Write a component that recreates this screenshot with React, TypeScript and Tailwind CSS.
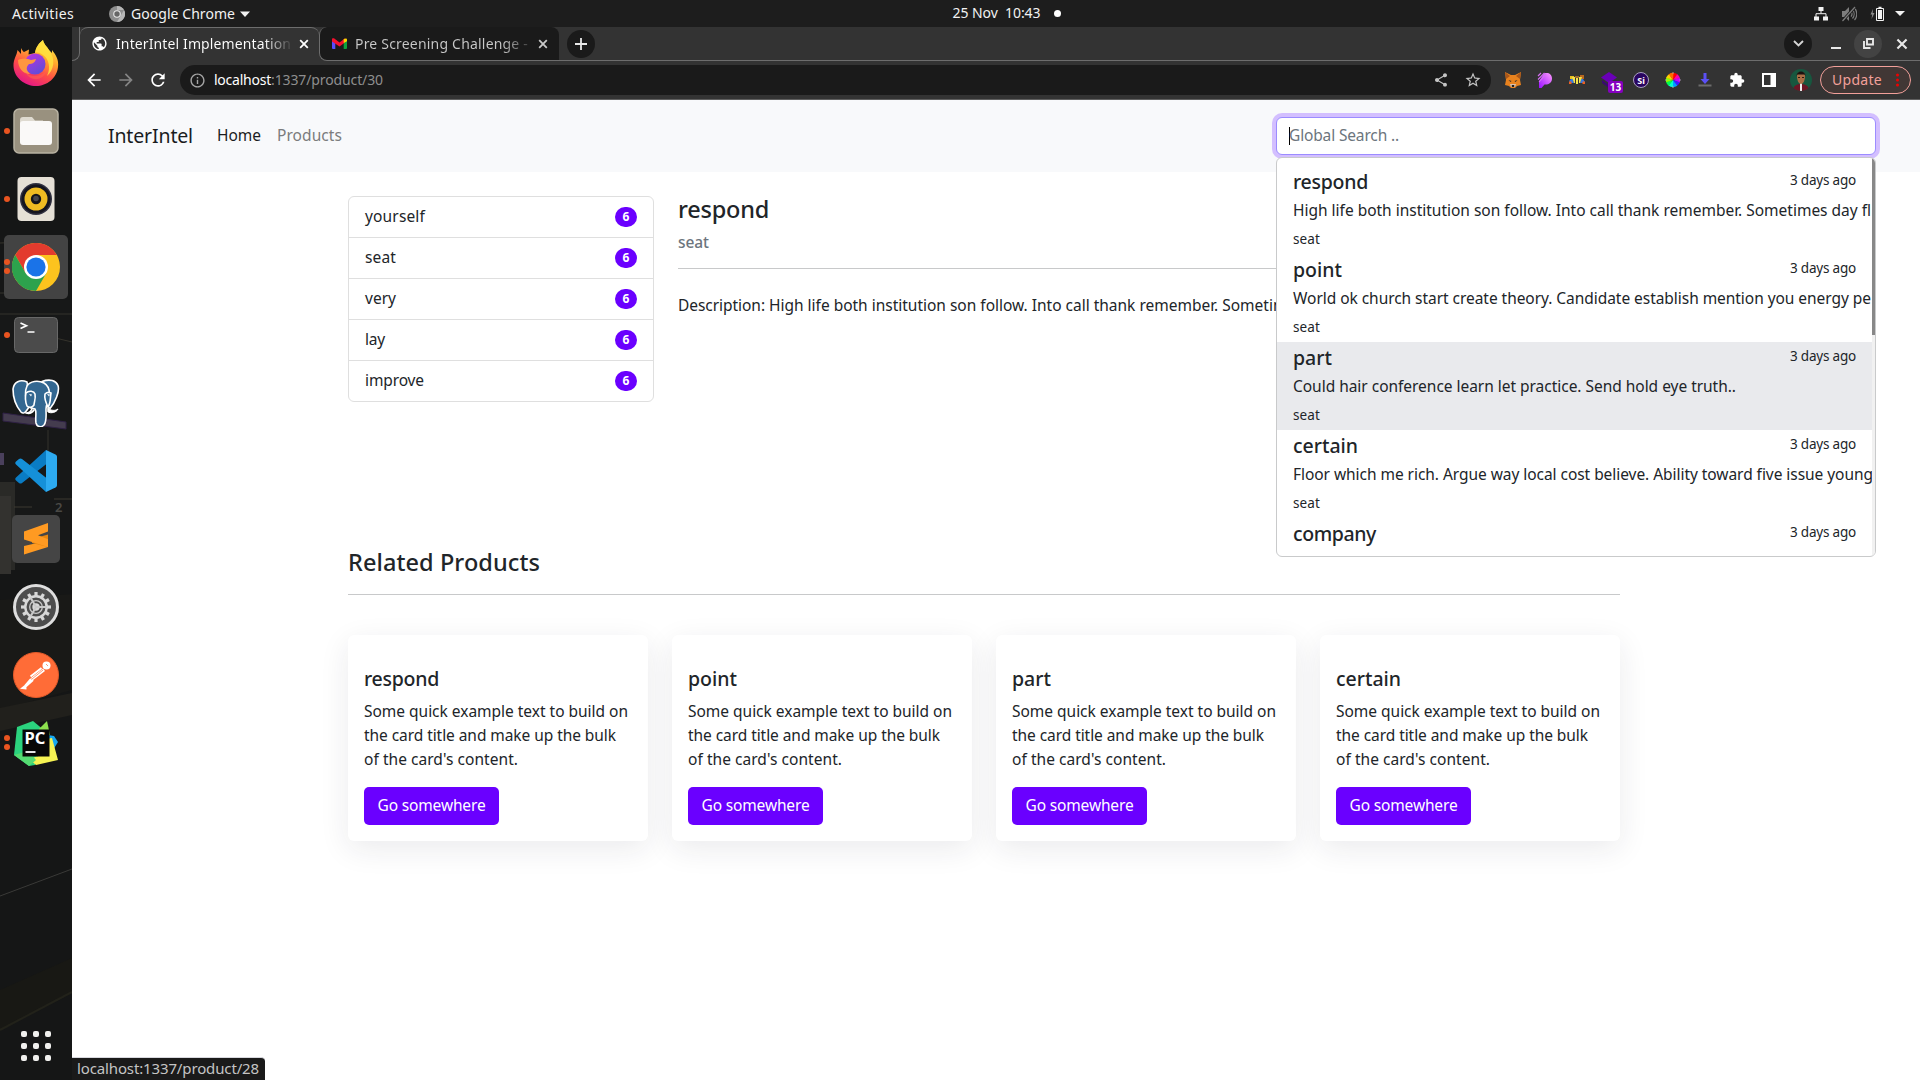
import React, { useLayoutEffect, useRef, useState } from "react";
import { MdExtension, MdShare, MdStarBorder, MdArrowBack, MdArrowForward, MdRefresh, MdPublic, MdInfoOutline } from "react-icons/md";

/* One line of text, tracked so that it spans exactly `w` pixels. */
function Line({ w, className = "", children }: { w: number; className?: string; children: string }) {
  const ref = useRef<HTMLSpanElement>(null);
  const [spacing, setSpacing] = useState(0);
  useLayoutEffect(() => {
    if (!ref.current) return;
    const natural = ref.current.getBoundingClientRect().width;
    setSpacing((w - natural) / children.length);
  }, [w, children]);
  return (
    <span ref={ref} className={`inline-block whitespace-pre ${className}`} style={{ letterSpacing: spacing }}>
      {children}
    </span>
  );
}

/* ---------- Top panel ---------- */

function TopBar() {
  return (
    <header className="grid h-[27px] shrink-0 grid-cols-[1fr_auto_1fr] items-center bg-[#1d1d1d] text-sm text-[#f2f2f2]">
      <div className="flex items-center pl-3">
        <Line w={62}>Activities</Line>
        <svg className="ml-[35px] size-4" viewBox="0 0 16 16">
          <circle cx="8" cy="8" r="8" fill="#8d8d8d" />
          <path d="M8 0a8 8 0 0 1 7 4H8zM15 4a8 8 0 0 1-7 12l3.500-6z" fill="#b5b5b5" />
          <circle cx="8" cy="8" r="3.800" fill="#e8e8e8" />
          <circle cx="8" cy="8" r="2.700" fill="#666" />
        </svg>
        <Line w={104} className="ml-[6px]">Google Chrome</Line>
        <svg className="ml-[5px] h-[6px] w-[10px]" viewBox="0 0 10 6"><path d="M0 .5h10L5 6z" fill="#f2f2f2" /></svg>
      </div>
      <div className="flex items-center pl-[93px]">
        <Line w={88} className="pb-0.5">25 Nov  10:43</Line>
        <span className="ml-[13px] size-[7px] rounded-full bg-white" />
      </div>
      <div className="flex items-center justify-end pr-[15px]">
        <svg className="size-4" viewBox="0 0 16 16" fill="#f2f2f2">
          <path d="M5.500 1h5v4h-5zM1 10.500h5v4H1zM10 10.500h5v4h-5z" />
          <path d="M8 5v2.500M3 11V7.700h10V11" fill="none" stroke="#f2f2f2" strokeWidth="1" />
        </svg>
        <svg className="ml-[12px] size-4" viewBox="0 0 16 16" fill="#7d7d7d">
          <path d="M1 5h3l4-4v14l-4-4H1z" />
          <path d="M10 5.500a4 4 0 0 1 0 5M11.500 3.500a7 7 0 0 1 0 9M13.500 2a9 9 0 0 1 0 12" fill="none" stroke="#7d7d7d" strokeWidth="1.200" />
          <path d="M1.500 15L14 1" stroke="#1d1d1d" strokeWidth="3" />
          <path d="M1.500 15L14 1" stroke="#7d7d7d" strokeWidth="1.200" />
        </svg>
        <svg className="ml-[13px] h-4 w-[15px]" viewBox="0 0 15 16">
          <path d="M3 3L.5 8.500h1.700L1.500 13 4.500 7H2.700z" fill="#8a8a8a" />
          <path d="M6.500 2.500h7v12h-7z" fill="none" stroke="#f2f2f2" strokeWidth="1" />
          <path d="M8.500.8h3v1.500h-3zM8 4h4v9H8z" fill="#f2f2f2" />
        </svg>
        <svg className="ml-[10px] h-[5px] w-[10px]" viewBox="0 0 10 5"><path d="M0 0h10L5 5z" fill="#f2f2f2" /></svg>
      </div>
    </header>
  );
}

/* ---------- Dock ---------- */

const gear = Array.from({ length: 12 }, (_, i) => i * 30);

const Firefox = () => (
  <svg className="size-[46px]" viewBox="0 0 46 46">
    <defs>
      <linearGradient id="ff1" x1=".8" y1="0" x2=".3" y2="1">
        <stop offset="0" stopColor="#fff44f" /><stop offset=".35" stopColor="#ffa92c" /><stop offset=".65" stopColor="#ff4f45" /><stop offset="1" stopColor="#e2148a" />
      </linearGradient>
      <linearGradient id="ff2" x1=".2" y1="0" x2=".8" y2="1"><stop offset="0" stopColor="#b833e1" /><stop offset="1" stopColor="#5a4fd6" /></linearGradient>
    </defs>
    <path d="M8 8c1 2 2 3.500 3 4l5-2.500-.5 5L22 13c1-6 4-10 8-13 1 5 4 6 6 10l3 3v-3c4 5 7 10 6 17C44 38 34 46 23 46S1 38 .5 26C.3 19 4 15 4.500 10L8 14z" fill="url(#ff1)" />
    <path d="M30 0c1 5 4 6 6 10 7 9 5 20-2 26 4-8 2-17-4-21-3-2-5-3-8-2 1-6 4-10 8-13z" fill="#ffe23e" opacity=".85" />
    <circle cx="22" cy="24" r="10.500" fill="url(#ff2)" />
    <path d="M5 20c5-2 10-1 13 0l5-1c-1 4-4 5-7 5-4 4-2 7 1 10-7 0-12-6-12-14z" fill="#ff9640" />
    <path d="M12 32c6 6 16 5 21-1-1 8-14 13-21 1z" fill="#ff5b4f" opacity=".7" />
  </svg>
);

const Files = () => (
  <svg className="size-[46px]" viewBox="0 0 46 46">
    <rect x="1" y="1" width="44" height="44" rx="5" fill="#99917f" stroke="#b8b2a2" strokeWidth="1.500" />
    <path d="M7 12a3 3 0 0 1 3-3h9l3 3.500h8V30H7z" fill="#dedad0" />
    <rect x="7" y="13" width="32" height="24" rx="3" fill="#faf9f8" />
  </svg>
);

const Rhythmbox = () => (
  <svg className="size-[46px]" viewBox="0 0 46 46">
    <rect x="4.500" y="1" width="37" height="44" rx="4" fill="#e5e0d6" />
    <circle cx="23" cy="23" r="16" fill="#303040" />
    <circle cx="23" cy="23" r="14.500" fill="#15151f" />
    <circle cx="23" cy="23" r="11.500" fill="#efbb22" />
    <circle cx="23" cy="23" r="5.200" fill="#15151a" />
    <circle cx="23" cy="22.500" r="2.800" fill="#45454c" />
  </svg>
);

const Chrome = () => (
  <svg className="size-12" viewBox="0 0 48 48">
    <circle cx="24" cy="24" r="24" fill="#fcc31e" />
    <path d="M24 12h20.800a24 24 0 0 0-41.600 0L13.600 30z" fill="#e33b2e" />
    <path d="M3.200 12A24 24 0 0 0 24 48l10.400-18H13.600z" fill="#2da24d" />
    <circle cx="24" cy="24" r="12" fill="#fff" />
    <circle cx="24" cy="24" r="9.600" fill="#1a73e8" />
  </svg>
);

const Terminal = () => (
  <svg className="h-9 w-11" viewBox="0 0 44 36">
    <rect x=".5" y=".5" width="43" height="35" rx="4" fill="#4b4b4b" stroke="#686868" />
    <path d="M6.500 6l6 2.800-6 2.800M13.500 15h7" fill="none" stroke="#fff" strokeWidth="1.700" />
  </svg>
);

const Postgres = () => (
  <svg className="size-12" viewBox="0 0 48 48">
    <g fill="#336791" stroke="#fff" strokeWidth="1.600" strokeLinejoin="round" strokeLinecap="round">
      <path d="M30 2.500c8-3 14-1 16 4 2 6-3 17-8 23L30 22z" />
      <path d="M15 3C8 0 2 3 1 10c0 8 3 17 8 23 2 2 4 1 6-2l4-6-3-15z" />
      <path d="M15 7c3-5 11-6 17-3 5 3 6 9 5 15-1 4-3 7-3 11 0 6 1 12-2 16-3 3-7 2-8-2-1-6 1-11-1-14-2-1-5 0-6-3-3-5-5-13-2-20z" />
      <path d="M14 14c3-3 8-2 9 1 1 5-1 8-1 11-2 3-5 3-7 1-2-5-2-9-1-13z" />
      <path d="M22 31c-2 3-5 4-8 3 3 0 5-2 6-4" fill="none" />
      <path d="M36 29c3 3 7 3 10 1-1 3-7 5-10 3z" fill="#fff" strokeWidth="1" />
      <path d="M33 15c2-2 4-2 6-1-1 5 0 10-3 14-2-4-4-8-3-13z" />
    </g>
    <path d="M17 15l3 .5-1 2zM35 15l3 .5-1 2z" fill="#fff" />
  </svg>
);

const VsCode = () => (
  <svg className="size-[42px]" viewBox="0 0 42 42">
    <path d="M31 0L1 27.500c-1 1-1 2 0 3l3 2.500c1 .8 2 .8 3 0L34 12z" fill="#0a7cc4" />
    <path d="M31 42L1 14.500c-1-1-1-2 0-3L4 9c1-.8 2-.8 3 0l27 21z" fill="#1590d8" />
    <path d="M31 0l9.500 4.500c1 .5 1.500 1.200 1.500 2.500v28c0 1.300-.5 2-1.500 2.500L31 42z" fill="#2daaf0" />
  </svg>
);

const Sublime = () => (
  <span className="flex size-12 items-center justify-center rounded-[5px] bg-[#454545]">
    <svg className="h-8 w-6" viewBox="0 0 24 32">
      <path d="M24 17.500V24L0 31.500V23z" fill="#ff9a22" />
      <path d="M8 16l16-4.500V24L8 20z" fill="#e8860f" />
      <path d="M0 8.500L24 0v8.500l-10 3.800 10 4V24L0 16.500z" fill="#ff9a22" />
    </svg>
  </span>
);

const Settings = () => (
  <svg className="size-[46px]" viewBox="0 0 46 46">
    <circle cx="23" cy="23" r="21.500" fill="#4d4d4d" stroke="#dedede" strokeWidth="3" />
    {gear.map((a) => (
      <rect key={a} x="21.400" y="8" width="3.200" height="5" fill="#d8d8d8" transform={`rotate(${a} 23 23)`} />
    ))}
    <circle cx="23" cy="23" r="10.700" fill="none" stroke="#d8d8d8" strokeWidth="2.400" />
    <circle cx="23" cy="23" r="6.300" fill="none" stroke="#c9c9c9" strokeWidth="1.300" />
    <circle cx="23" cy="23" r="3.700" fill="#d8d8d8" />
    <path d="M23 23h11M23 23l-5.500-9.500M23 23l-5.500 9.500" stroke="#c9c9c9" strokeWidth="2" />
  </svg>
);

const Postman = () => (
  <svg className="size-[46px]" viewBox="0 0 46 46">
    <circle cx="23" cy="23" r="22.500" fill="#ff6c37" stroke="#e25a2a" />
    <circle cx="33.500" cy="13.500" r="4" fill="#fff" />
    <path d="M30 16.500L18 26l1.500 2.500L32 19z" fill="#fff" />
    <path d="M17.500 24.500l11-8.500M20 28l-9 8M18 27l-6 7-2.500 2 4 .5" fill="none" stroke="#fff" strokeWidth="2" />
    <path d="M19 27l11-9M33 12l2 2" stroke="#ff6c37" strokeWidth=".7" />
  </svg>
);

const PyCharm = () => (
  <svg className="size-[46px]" viewBox="0 0 46 46">
    <path d="M4 7L20 1l12 10-10 34-6 1L1 35z" fill="#2bd37e" />
    <path d="M26 9l8-8 3 14-10 6z" fill="#8de04e" />
    <path d="M35 15l6 1 4 6-5 8z" fill="#17a8f0" />
    <path d="M33 19l6-1 6 22-22 5-7-6 16-5z" fill="#f6f353" />
    <path d="M1 35l14-4 8 9-7 6z" fill="#55db72" />
    <rect x="9.500" y="9.500" width="27" height="27" fill="#080808" />
    <text x="11.500" y="23.500" fontFamily="Noto Sans, sans-serif" fontWeight="700" fontSize="16.500" fill="#fff">PC</text>
    <path d="M12.500 32h10" stroke="#fff" strokeWidth="1.800" />
  </svg>
);

const dock = [
  { Icon: Firefox, dots: 0 }, { Icon: Files, dots: 1 }, { Icon: Rhythmbox, dots: 1 }, { Icon: Chrome, dots: 2, active: true },
  { Icon: Terminal, dots: 1 }, { Icon: Postgres, dots: 0 }, { Icon: VsCode, dots: 0 }, { Icon: Sublime, dots: 0 },
  { Icon: Settings, dots: 0 }, { Icon: Postman, dots: 0 }, { Icon: PyCharm, dots: 2 },
];

function Wallpaper() {
  return (
    <svg className="absolute inset-0 h-full w-[72px]" viewBox="0 27 72 1053" preserveAspectRatio="none">
      <rect y="27" width="72" height="1053" fill="#151616" />
      <path d="M0 300h72v270H0z" fill="#171818" />
      <path d="M0 243l28-1M0 293h30M0 314h72M14 328l58 14M48 430v40" stroke="#35332c" strokeWidth="1" />
      <path d="M3 413l63 9v7L3 421z" fill="#443c4e" stroke="#2f2145" />
      <path d="M0 453h4v12H0z" fill="#4a405c" />
      <path d="M0 482h15v88H0z" fill="#2a2a27" />
      <path d="M0 496h11v78H0z" fill="#33322f" />
      <path d="M54 499h18M14 507h18" stroke="#3c3930" />
      <text x="55" y="512" fontFamily="Noto Sans, sans-serif" fontSize="13" fontWeight="600" fill="#4a4945">2</text>
      <path d="M0 600l72-6v96l-72 20z" fill="#191917" />
      <path d="M0 708l72-15v22L0 731z" fill="#21201c" />
      <path d="M0 896l72-27" stroke="#3a3a38" />
      <path d="M0 990l72-32v35L0 1030z" fill="#181814" />
      <path d="M0 1030l72-38" stroke="#22221a" strokeWidth="2" />
    </svg>
  );
}

function Dock() {
  return (
    <nav className="relative w-[72px] shrink-0 overflow-hidden bg-[#151616]">
      <Wallpaper />
      <div className="relative flex h-full flex-col pt-[1.500px]">
        {dock.map(({ Icon, dots, active }, i) => (
          <div key={i} className="relative flex h-[68px] items-center justify-center">
            <div className={`flex size-16 items-center justify-center rounded-[5px] ${active ? "bg-[#434343]" : ""}`}>
              <Icon />
            </div>
            <div className="absolute left-1 flex flex-col gap-[3px]">
              {Array.from({ length: dots }, (_, d) => <span key={d} className="size-[6px] rounded-full bg-[#e95420]" />)}
            </div>
          </div>
        ))}
        <div className="mt-auto mb-[19px] grid grid-cols-3 gap-[6px] self-center">
          {Array.from({ length: 9 }, (_, i) => <span key={i} className="size-[6px] rounded-[2px] bg-[#f0f0ee]" />)}
        </div>
      </div>
    </nav>
  );
}

/* ---------- Browser chrome ---------- */

const Cross = ({ className = "" }: { className?: string }) => (
  <svg className={`shrink-0 ${className}`} viewBox="0 0 10 10"><path d="M1.200 1.200l7.600 7.600M8.800 1.200L1.200 8.800" stroke="currentColor" strokeWidth="1.800" /></svg>
);

function TabStrip() {
  return (
    <div className="flex h-[34px] shrink-0 bg-[#333333]">
      <div className="w-2 rounded-br-lg border-r border-b border-[#6d6d6d]" />
      <div className="flex h-[34px] w-[239px] items-center rounded-t-lg border-t border-[#6d6d6d] pb-0.5 pl-[11px] text-white">
        <MdPublic className="size-[17px] shrink-0" />
        <Line w={175} className="ml-[8px] bg-linear-to-r from-white from-85% to-[#444] bg-clip-text text-sm text-transparent">InterIntel Implementation</Line>
        <Cross className="ml-[8px] size-[10px]" />
      </div>
      <div className="flex h-[34px] w-[240px] items-center rounded-t-lg rounded-bl-lg border-b border-l border-[#6d6d6d] bg-[#1a1a1a] pl-[12px] text-[#c9c9c9]">
        <svg className="h-[11px] w-[15px] shrink-0" viewBox="0 0 15 11">
          <path d="M0 1l3.300 2.500V11H1a1 1 0 0 1-1-1z" fill="#5a4bff" /><path d="M11.700 3.500L15 1v9a1 1 0 0 1-1 1h-2.300z" fill="#10a33c" />
          <path d="M0 1C0 0 1 0 2 .3l5.500 4.200L13 .3V4.500L7.500 8.500 0 3.500z" fill="#f5102e" /><path d="M11.700 1.300c1-1 3.300-1.500 3.300.5v1.500L11.700 5z" fill="#ffd400" />
        </svg>
        <Line w={173} className="ml-[8px] bg-linear-to-r from-[#c9c9c9] from-85% to-[#444] bg-clip-text text-sm text-transparent">Pre Screening Challenge -</Line>
        <Cross className="ml-[10px] size-[10px]" />
      </div>
      <div className="flex flex-1 items-center border-b border-[#6d6d6d] pr-[12px] pl-[8px] text-[#e8e8e8]">
        <span className="flex size-7 items-center justify-center rounded-full bg-[#1a1a1a]">
          <svg className="size-3" viewBox="0 0 12 12"><path d="M6 0v12M0 6h12" stroke="#e8e8e8" strokeWidth="1.800" /></svg>
        </span>
        <span className="ml-auto flex size-7 items-center justify-center rounded-full bg-[#1a1a1a]">
          <svg className="h-[7px] w-[11px]" viewBox="0 0 11 7"><path d="M1 1l4.500 4.500L10 1" fill="none" stroke="#d5d5d5" strokeWidth="1.900" /></svg>
        </span>
        <span className="mt-[9px] ml-[19px] h-[2px] w-[10px] bg-[#e8e8e8]" />
        <span className="ml-[13px] flex size-7 items-center justify-center rounded-full bg-[#434343]">
          <svg className="size-[11px]" viewBox="0 0 11 11"><path d="M4 1h6v5.500H4zM1 3v7h6.500" fill="none" stroke="#e8e8e8" strokeWidth="1.900" /></svg>
        </span>
        <Cross className="ml-[14px] size-[12px]" />
      </div>
    </div>
  );
}

const wheel = ["#ff0000", "#ff00aa", "#c800ff", "#3a1cff", "#00a0ff", "#00ffd0", "#00ff50", "#8cff00", "#ffd000", "#ff6a00"];

function Extensions() {
  return (
    <div className="flex items-center gap-4 pl-[14px]">
      <svg className="size-4" viewBox="0 0 16 16">
        <path d="M0 0l6 3h4l6-3-1 8 1 5-4 1-2 2H6l-2-2-4-1 1-5z" fill="#e8821e" />
        <path d="M0 0l5 4-4 3zM16 0l-5 4 4 3z" fill="#a8561a" /><path d="M3.500 8l3 1-1 1zM12.500 8l-3 1 1 1z" fill="#2b2b2b" /><path d="M5 12h6l-1 3H6z" fill="#d8c0b0" /><path d="M6.800 13h2.400v2H6.800z" fill="#222" />
      </svg>
      <svg className="size-4" viewBox="0 0 16 16">
        <defs><linearGradient id="pp" x1="0" y1="1" x2="1" y2="0"><stop offset="0" stopColor="#9a10ff" /><stop offset="1" stopColor="#ff9aff" /></linearGradient></defs>
        <path d="M7 1.500C11 0 15 2 15 6.500S11 13 7.500 12.500L4.500 16H2V9z" fill="url(#pp)" />
        <path d="M1 4l3-3M1 7.500L7.500 1M2 10l7-8" stroke="#d770f5" strokeWidth="1.100" />
      </svg>
      <svg className="size-4" viewBox="0 0 16 16">
        <path d="M1 4h4v3H1z" fill="#e8c020" /><path d="M11 3h4v4h-4z" fill="#b86820" /><path d="M6 4h4v2H6z" fill="#9a6a30" />
        <path d="M0 9l2-2h2l1 4H2zM11 11l1-4h2l2 3-2 1z" fill="#3478e0" /><path d="M3 5h3v6H5zM7 6h2v6H7zM10 5h3l-2 6h-1z" fill="#f5e34a" /><path d="M0 9.500h2.500v2.500H0zM13.500 9.500H16V12h-2.500z" fill="#f06020" />
      </svg>
      <span className="relative size-4">
        <svg className="size-4" viewBox="0 0 16 16"><path d="M8 0l8 5.500-8 5.500-8-5.500z" fill="#6a00b8" /><path d="M1 8l7 5 7-5v3l-7 5-7-5z" fill="#3a0a70" /></svg>
        <span className="absolute top-[9px] left-[7px] flex h-[12px] w-[15px] items-center justify-center rounded-[2px] bg-[#8500c0] text-[10px] leading-none font-bold text-white">13</span>
      </span>
      <span className="flex size-4 items-center justify-center rounded-full border border-[#a9a0c0] bg-[#2a0560] text-[9px] leading-none font-bold text-white">Si</span>
      <svg className="size-4" viewBox="0 0 16 16">
        {wheel.map((c, i) => <path key={c} d="M8 8L8 .8A7.200 7.200 0 0 1 12.600 2.500z" fill={c} transform={`rotate(${i * 36} 8 8)`} />)}
        <path d="M8 0v2M8 14v2M0 8h2M14 8h2" stroke="#aaa" strokeWidth=".8" />
      </svg>
      <svg className="size-4" viewBox="0 0 16 16"><path d="M6.500 1h3v6h3L8 12 3.500 7h3z" fill="#5b50f5" /><path d="M1.500 12.500h13v2h-13z" fill="#6c6c6c" /></svg>
      <MdExtension className="size-4 text-white" />
      <svg className="size-4" viewBox="0 0 16 16"><path d="M1 1h14v14H1zM3 3v10h6.500V3z" fill="#fff" fillRule="evenodd" /></svg>
    </div>
  );
}

function Toolbar() {
  return (
    <div className="flex h-[39px] shrink-0 items-center border-b border-[#5f5f5f] bg-[#333333] pr-[9px] pl-[12px]">
      <MdArrowBack className="size-5 text-white" />
      <MdArrowForward className="ml-3 size-5 text-[#858585]" />
      <MdRefresh className="ml-3 size-5 text-white" />
      <div className="ml-[12px] flex h-[30px] w-[1311px] items-center rounded-full bg-[#1a1a1a] pr-[9px] pl-[9px]">
        <MdInfoOutline className="size-[17px] text-[#a5a5a5]" />
        <Line w={57} className="ml-2 text-sm text-white">localhost</Line>
        <Line w={112} className="text-sm text-[#8e8e8e]">:1337/product/30</Line>
        <MdShare className="ml-auto size-4 text-[#c4c4c4]" />
        <MdStarBorder className="ml-[15px] size-[18px] text-[#c4c4c4]" />
      </div>
      <Extensions />
      <svg className="ml-[13px] size-[22px]" viewBox="0 0 22 22">
        <defs><clipPath id="av"><circle cx="11" cy="11" r="11" /></clipPath></defs>
        <g clipPath="url(#av)">
          <rect width="22" height="22" fill="#17573f" /><path d="M3 22c0-5 3-7 8-7s8 2 8 7z" fill="#6b1525" /><path d="M10 14h2v8h-2z" fill="#eee" />
          <path d="M7 7a4 4 0 0 1 8 0c0 5-2 8-4 8S7 12 7 7z" fill="#a86e45" /><path d="M6.500 7c0-6 9-6 9 0l-1-1.500h-7z" fill="#1b1210" /><path d="M8 8.500h2M12 8.500h2" stroke="#301a10" />
        </g>
      </svg>
      <span className="ml-auto flex h-7 w-[91px] items-center rounded-full border border-[#f2a09a] bg-[#413735] pl-[11px] text-[#f2a09a]">
        <Line w={50} className="text-sm">Update</Line>
        <svg className="ml-[14px] h-[14px] w-[3px]" viewBox="0 0 3 14" fill="#f00000"><circle cx="1.500" cy="2" r="1.500" /><circle cx="1.500" cy="7" r="1.500" /><circle cx="1.500" cy="12" r="1.500" /></svg>
      </span>
    </div>
  );
}

/* ---------- Page ---------- */

const results = [
  { title: "respond", tw: 75, text: "High life both institution son follow. Into call thank remember. Sometimes day fl", w: 578 },
  { title: "point", tw: 49, text: "World ok church start create theory. Candidate establish mention you energy pe", w: 578 },
  { title: "part", tw: 39, text: "Could hair conference learn let practice. Send hold eye truth..", w: 443, active: true },
  { title: "certain", tw: 65, text: "Floor which me rich. Argue way local cost believe. Ability toward five issue young", w: 580 },
  { title: "company", tw: 83, text: "Able south the company need more already share take of", w: 470 },
];

function SearchResults() {
  return (
    <div className="absolute top-[57px] right-[44px] flex h-[400px] w-[600px] overflow-hidden rounded-md border border-[#c9cacb] bg-white">
      <div className="min-w-0 flex-1 overflow-hidden pt-2">
        {results.map((r) => (
          <div key={r.title} className={`h-[88px] pl-4 whitespace-nowrap ${r.active ? "bg-[#e9eaed]" : ""}`}>
            <div className="flex h-8 items-center justify-between pr-4">
              <Line w={r.tw} className="text-[19.5px] leading-8 font-medium">{r.title}</Line>
              <Line w={66} className="mb-[4px] text-[13.5px]">3 days ago</Line>
            </div>
            <div className="h-6 text-[15.5px] leading-6"><Line w={r.w}>{r.text}</Line></div>
            <div className="h-8 text-[13.5px] leading-[34px]"><Line w={27}>seat</Line></div>
          </div>
        ))}
      </div>
      <div className="w-[3px] bg-[#f1f1f1]"><div className="h-[177px] bg-[#888888]" /></div>
    </div>
  );
}

function Navbar() {
  return (
    <div className="flex h-[72px] items-center bg-[#f8f9fb] pr-[44px] pl-9">
      <Line w={85} className="text-[19.5px] text-[#1a1c1e]">InterIntel</Line>
      <Line w={44} className="ml-6 text-[15.5px] text-[#1a1c1e]">Home</Line>
      <Line w={65} className="ml-4 text-[15.5px] text-[#7b7c7d]">Products</Line>
      <div className="ml-auto flex h-[38px] w-[600px] items-center rounded-md border border-[#9c8cff] bg-white pl-3 ring-4 ring-[#d3bfff]">
        <span className="h-[18px] w-px bg-black" />
        <Line w={110} className="-ml-px text-[15.5px] text-[#6c757d]">Global Search ..</Line>
      </div>
    </div>
  );
}

const categories = [["yourself", 60], ["seat", 31], ["very", 31], ["lay", 20], ["improve", 59]] as const;
const cards = [["respond", 75], ["point", 49], ["part", 39], ["certain", 65]] as const;

function Page() {
  return (
    <main className="relative flex-1 bg-white text-[#212529]">
      <Navbar />
      <div className="ml-[276px] w-[1272px]">
        <section className="flex gap-6 pt-6">
          <ul className="w-[306px] rounded-md border border-[#dfdfdf]">
            {categories.map(([name, w], i) => (
              <li key={name} className={`flex items-center justify-between px-4 ${i ? "h-[41px] border-t border-[#dfdfdf]" : "h-10"}`}>
                <Line w={w} className="text-[15.5px]">{name}</Line>
                <span className="flex h-5 w-[22px] items-center justify-center rounded-full bg-[#6a00ff] text-xs leading-none font-bold text-white">6</span>
              </li>
            ))}
          </ul>
          <div className="flex-1 whitespace-nowrap">
            <div className="h-[29px] text-[23.5px] leading-[27px] font-medium"><Line w={91}>respond</Line></div>
            <div className="mt-[7px] h-5 text-[15.5px] leading-5 font-medium text-[#6c757d]"><Line w={31}>seat</Line></div>
            <div className="mt-4 border-t border-[#c8c9ca]" />
            <div className="mt-6 h-6 text-[15.5px] leading-6">
              <Line w={91}>{"Description: "}</Line><Line w={578}>{results[0].text}</Line>
            </div>
          </div>
        </section>
        <h2 className="mt-[145px] h-8 text-[23.5px] leading-[30px] font-medium"><Line w={192}>Related Products</Line></h2>
        <div className="mt-[15px] border-t border-[#c8c9ca]" />
        <section className="mt-10 grid grid-cols-4 gap-6">
          {cards.map(([title, w]) => (
            <article key={title} className="h-[206px] rounded-md bg-white px-4 pt-8 shadow-[0_8px_30px_rgba(33,37,60,0.09)]">
              <div className="h-6 text-[19.5px] leading-6 font-medium"><Line w={w}>{title}</Line></div>
              <div className="mt-2 flex flex-col items-start text-[15.5px] leading-6">
                <Line w={264}>Some quick example text to build on</Line>
                <Line w={252}>the card title and make up the bulk</Line>
                <Line w={154}>of the card's content.</Line>
              </div>
              <button className="mt-4 flex h-[38px] w-[135px] items-center justify-center rounded-[5px] bg-[#6a00ff] text-[15.5px] text-white">
                <Line w={108}>Go somewhere</Line>
              </button>
            </article>
          ))}
        </section>
      </div>
      <SearchResults />
      <div className="absolute bottom-0 left-0 flex h-[23px] w-[193px] items-center rounded-tr border-t border-[#d8d8de] bg-[#1a1a1a] pb-0.5 pl-[5px] text-[15px] leading-none text-[#c4c4c4]">
        <Line w={182}>localhost:1337/product/28</Line>
      </div>
    </main>
  );
}

export default function App() {
  return (
    <div className="flex h-[1080px] w-[1920px] flex-col overflow-hidden font-['Noto_Sans','Open_Sans',sans-serif]">
      <TopBar />
      <div className="flex min-h-0 flex-1">
        <Dock />
        <div className="flex min-w-0 flex-1 flex-col">
          <TabStrip />
          <Toolbar />
          <Page />
        </div>
      </div>
    </div>
  );
}
